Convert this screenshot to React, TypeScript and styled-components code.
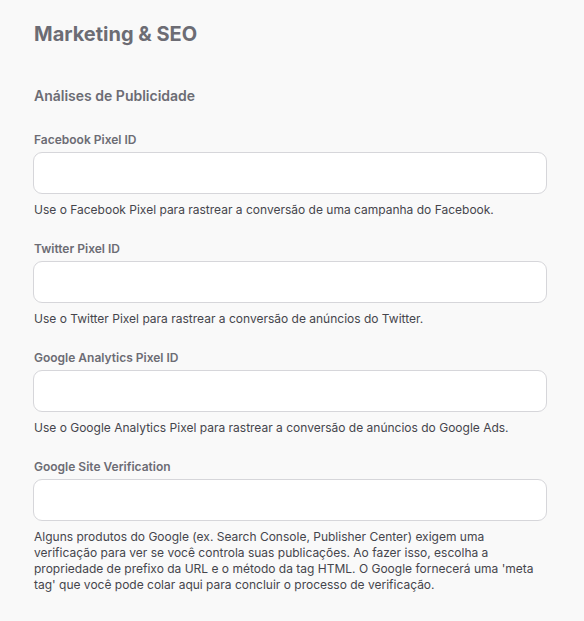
import React from "react";
import styled, { createGlobalStyle } from "styled-components";

const Global = createGlobalStyle`
  html, body { margin: 0; padding: 0; background: #f9f9f9; }
  body { font-family: Inter, "Noto Sans", sans-serif; -webkit-font-smoothing: antialiased; }
  * { box-sizing: border-box; }
`;

const Page = styled.div`
  padding: 22px 37px 30px 33px;
  display: flex;
  flex-direction: column;
`;

const Title = styled.h1`
  margin: 0;
  font-size: 20px;
  line-height: 24px;
  font-weight: 700;
  color: #6c6c74;
  padding-left: 1px;
`;

const SectionTitle = styled.h2`
  margin: 40px 0 0;
  font-size: 14px;
  line-height: 20px;
  font-weight: 600;
  color: #6c6c74;
  padding-left: 1px;
`;

const Fields = styled.div`
  margin-top: 26px;
  display: flex;
  flex-direction: column;
  gap: 23px;
`;

const Field = styled.div`
  display: flex;
  flex-direction: column;
`;

const Label = styled.label`
  font-size: 12px;
  line-height: 16px;
  font-weight: 600;
  color: #6c6c74;
  padding-left: 1px;
`;

const Input = styled.input`
  margin-top: 4px;
  height: 42px;
  width: 100%;
  border: 1px solid #d6d6da;
  border-radius: 9px;
  background: #ffffff;
  font-family: inherit;
  font-size: 14px;
  padding: 0 12px;
  outline: none;
`;

const Help = styled.p`
  margin: 8px 0 0;
  font-size: 12px;
  line-height: 16px;
  color: #45454c;
  padding-left: 1px;
`;

const fields = [
  {
    label: "Facebook Pixel ID",
    help: "Use o Facebook Pixel para rastrear a conversão de uma campanha do Facebook.",
  },
  {
    label: "Twitter Pixel ID",
    help: "Use o Twitter Pixel para rastrear a conversão de anúncios do Twitter.",
  },
  {
    label: "Google Analytics Pixel ID",
    help: "Use o Google Analytics Pixel para rastrear a conversão de anúncios do Google Ads.",
  },
  {
    label: "Google Site Verification",
    help: "Alguns produtos do Google (ex. Search Console, Publisher Center) exigem uma verificação para ver se você controla suas publicações. Ao fazer isso, escolha a propriedade de prefixo da URL e o método da tag HTML. O Google fornecerá uma 'meta tag' que você pode colar aqui para concluir o processo de verificação.",
  },
];

export default function App() {
  return (
    <>
      <Global />
      <Page>
        <Title>Marketing &amp; SEO</Title>
        <SectionTitle>Análises de Publicidade</SectionTitle>
        <Fields>
          {fields.map((f) => (
            <Field key={f.label}>
              <Label>{f.label}</Label>
              <Input type="text" />
              <Help>{f.help}</Help>
            </Field>
          ))}
        </Fields>
      </Page>
    </>
  );
}
